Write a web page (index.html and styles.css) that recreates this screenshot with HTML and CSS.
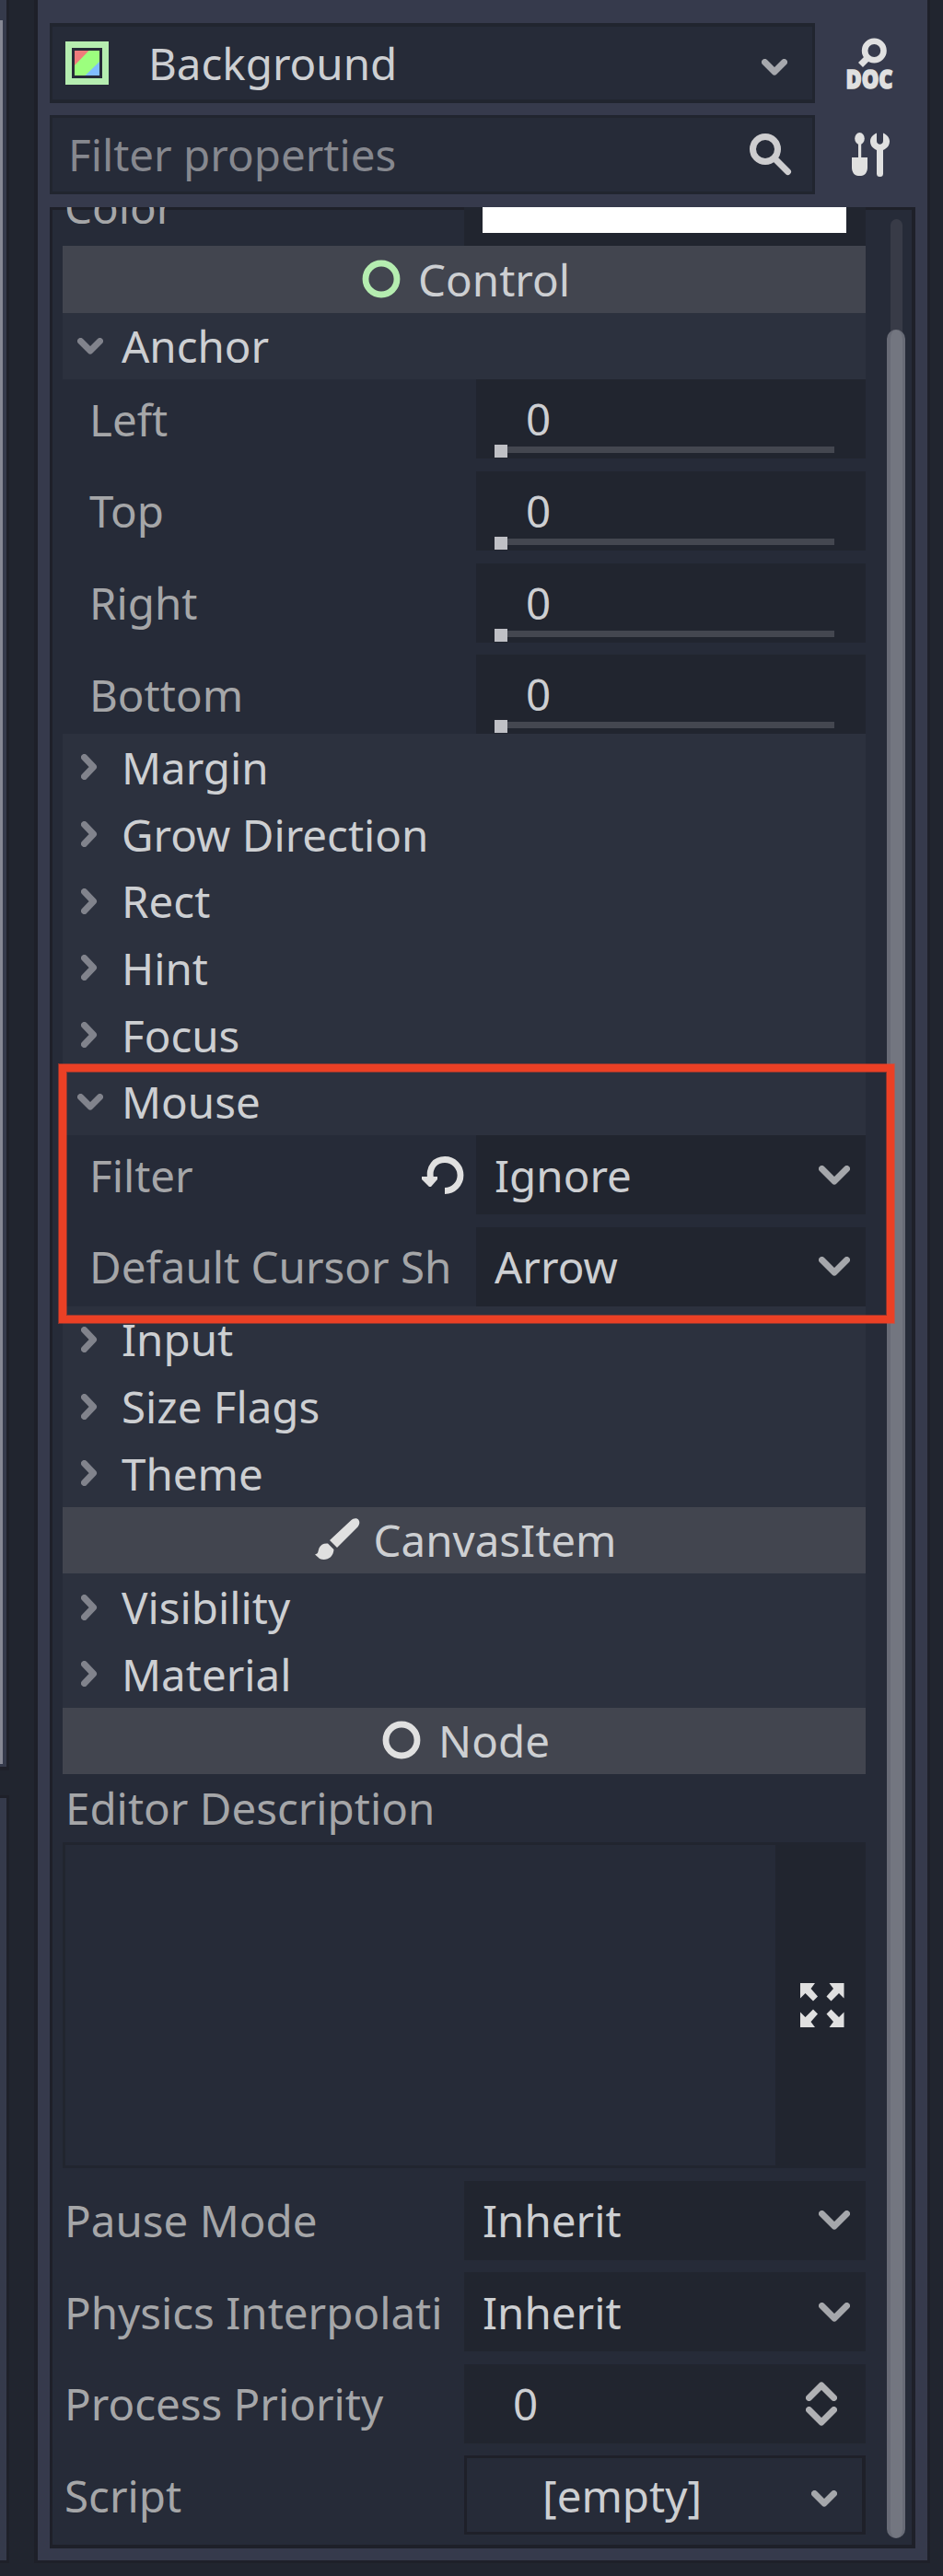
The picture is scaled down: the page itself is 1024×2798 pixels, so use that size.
FILE: index.html
```html
<!DOCTYPE html>
<html lang="en">
<head>
<meta charset="utf-8">
<title>Inspector</title>
<link rel="stylesheet" href="styles.css">
</head>
<body>
<svg class="defs" width="0" height="0" aria-hidden="true">
  <symbol id="down-lg" viewBox="0 0 34 21"><path d="M3.5 3.5 17 17 30.500 3.500" fill="none" stroke="currentColor" stroke-width="7" stroke-linecap="round" stroke-linejoin="round"/></symbol>
  <symbol id="down-sm" viewBox="0 0 28 18"><path d="M3.500 3.500 14 14 24.500 3.500" fill="none" stroke="currentColor" stroke-width="7" stroke-linecap="round" stroke-linejoin="round"/></symbol>
  <symbol id="right-sm" viewBox="0 0 18 28"><path d="M3.500 3.500 13.500 14 3.500 24.500" fill="none" stroke="currentColor" stroke-width="7" stroke-linecap="round" stroke-linejoin="round"/></symbol>
  <symbol id="ring" viewBox="0 0 42 42"><circle cx="21" cy="21" r="17" fill="none" stroke="currentColor" stroke-width="6.800"/></symbol>
</svg>
<div class="editor">
  <aside class="left-docks">
    <div class="dock dock-top"><div class="dock-scroll"></div></div>
    <div class="dock dock-bottom"></div>
  </aside>
  <main class="inspector">
    <div class="toolbar">
      <div class="field node-field">
        <svg class="node-icon" width="47" height="47" viewBox="0 0 47 47"><path d="M3.500 3.500h40v40h-40z" fill="none" stroke="#b5edb0" stroke-width="7"/><path d="M10 10h27v27H10z" fill="#9cff7e"/><path d="M10 10h15.500L10 26z" fill="#ef7b7b"/><path d="M37 37H21.500L37 22z" fill="#80bdff"/></svg>
        <span class="node-name">Background</span>
        <svg class="chev" width="28" height="18"><use href="#down-sm"/></svg>
      </div>
      <svg class="tool" width="54" height="60" viewBox="0 0 54 60">
        <g fill="none" stroke="#e0e0e0"><circle cx="32.300" cy="16" r="10.200" stroke-width="6.600"/><path d="M25 24 17.500 31.500" stroke-width="7"/></g>
        <text class="doc-text" x="1.500" y="56.500" textLength="51" lengthAdjust="spacingAndGlyphs">DOC</text>
      </svg>
    </div>
    <div class="toolbar filter-bar">
      <div class="field filter-field">
        <span class="placeholder">Filter properties</span>
        <svg class="search" width="48" height="48" viewBox="0 0 48 48" fill="none" stroke="#cdcdcf"><circle cx="18" cy="18" r="13.500" stroke-width="7"/><path d="M28 28 42.500 42.500" stroke-width="7" stroke-linecap="round"/></svg>
      </div>
      <svg class="tool" width="54" height="60" viewBox="0 0 54 60" fill="#e0e0e0">
        <ellipse cx="16.500" cy="12.500" rx="5.300" ry="6.500"/><path d="M15 12h3.200v22H15zM8 33h17v11c0 5-3 9-7 9h-3c-4 0-7-4-7-9z"/>
        <path d="M35 6.500c-4.500 2-7 5-7 9 0 4.500 2.500 7.500 7 9.500v25.500a3.500 3.500 0 0 0 7 0V25c4.500-2 7-5 7-9.500 0-4-2.500-7-7-9V15c0 5-7 5-7 0z"/>
      </svg>
    </div>
    <div class="scroll-box">
      <div class="properties">
        <div class="prop wide color-row"><span class="label">Color</span><div class="value swatch-cell"><div class="swatch"></div></div></div>
        <div class="category"><svg class="ring green" width="42" height="42"><use href="#ring"/></svg><span>Control</span></div>
        <div class="section open"><svg class="arrow" width="28" height="18"><use href="#down-sm"/></svg><span>Anchor</span></div>
        <div class="group">
          <div class="prop"><span class="label">Left</span><div class="value num"><span>0</span><div class="slider"><div class="thumb"></div></div></div></div>
          <div class="prop"><span class="label">Top</span><div class="value num"><span>0</span><div class="slider"><div class="thumb"></div></div></div></div>
          <div class="prop"><span class="label">Right</span><div class="value num"><span>0</span><div class="slider"><div class="thumb"></div></div></div></div>
          <div class="prop"><span class="label">Bottom</span><div class="value num"><span>0</span><div class="slider"><div class="thumb"></div></div></div></div>
        </div>
        <div class="section"><svg class="arrow" width="18" height="28"><use href="#right-sm"/></svg><span>Margin</span></div>
        <div class="section"><svg class="arrow" width="18" height="28"><use href="#right-sm"/></svg><span>Grow Direction</span></div>
        <div class="section"><svg class="arrow" width="18" height="28"><use href="#right-sm"/></svg><span>Rect</span></div>
        <div class="section"><svg class="arrow" width="18" height="28"><use href="#right-sm"/></svg><span>Hint</span></div>
        <div class="section"><svg class="arrow" width="18" height="28"><use href="#right-sm"/></svg><span>Focus</span></div>
        <div class="section open"><svg class="arrow" width="28" height="18"><use href="#down-sm"/></svg><span>Mouse</span></div>
        <div class="group">
          <div class="prop"><span class="label">Filter</span>
            <svg class="revert" width="48" height="44" viewBox="0 0 48 44"><path d="M9.500 25.500C7.500 13 15 5.500 25 5.500a17 17 0 0 1 0 34" fill="none" stroke="#e0e0e0" stroke-width="6.800"/><path d="M0 24h17v3l-7 8H8l-8-8z" fill="#e0e0e0"/></svg>
            <div class="value select"><span>Ignore</span><svg width="34" height="21"><use href="#down-lg"/></svg></div></div>
          <div class="prop"><span class="label">Default Cursor Sh</span><div class="value select"><span>Arrow</span><svg width="34" height="21"><use href="#down-lg"/></svg></div></div>
        </div>
        <div class="section"><svg class="arrow" width="18" height="28"><use href="#right-sm"/></svg><span>Input</span></div>
        <div class="section"><svg class="arrow" width="18" height="28"><use href="#right-sm"/></svg><span>Size Flags</span></div>
        <div class="section"><svg class="arrow" width="18" height="28"><use href="#right-sm"/></svg><span>Theme</span></div>
        <div class="category canvas"><svg class="brush" width="49" height="48" viewBox="0 0 49 48" fill="#e0e0e0"><path d="M39 3.500c3-3 7-3 8.500-.5 1.500 2 1 5-1 7.500L24 33l-8-8z"/><path d="M14 28.500l6.500 6.500c-.5 7-5 11-11 11-5 0-6-3-9.500-5.500 4-1 3-3 4.500-7 1.500-3.500 5-5.500 9.500-5z"/></svg><span>CanvasItem</span></div>
        <div class="section"><svg class="arrow" width="18" height="28"><use href="#right-sm"/></svg><span>Visibility</span></div>
        <div class="section"><svg class="arrow" width="18" height="28"><use href="#right-sm"/></svg><span>Material</span></div>
        <div class="category"><svg class="ring" width="42" height="42"><use href="#ring"/></svg><span>Node</span></div>
        <div class="desc-label">Editor Description</div>
        <div class="desc-box"><div class="desc-input"></div>
          <svg width="48" height="48" viewBox="0 0 48 48" fill="#e0e0e0"><g id="q"><path d="M0 0h16l-4.500 6 7.500 8.500-5 5L5.500 11 0 16.500z"/></g><use href="#q" transform="translate(47.500) scale(-1 1)"/><use href="#q" transform="translate(0 48) scale(1 -1)"/><use href="#q" transform="translate(47.500 48) scale(-1 -1)"/></svg>
        </div>
        <div class="group node-props">
          <div class="prop wide"><span class="label">Pause Mode</span><div class="value select"><span>Inherit</span><svg width="34" height="21"><use href="#down-lg"/></svg></div></div>
          <div class="prop wide"><span class="label">Physics Interpolati</span><div class="value select"><span>Inherit</span><svg width="34" height="21"><use href="#down-lg"/></svg></div></div>
          <div class="prop wide"><span class="label">Process Priority</span><div class="value spin"><span>0</span><div class="spinner"><svg class="up" width="34" height="21"><use href="#down-lg"/></svg><svg width="34" height="21"><use href="#down-lg"/></svg></div></div></div>
          <div class="prop wide"><span class="label">Script</span><div class="value script"><span>[empty]</span><svg width="28" height="18"><use href="#down-sm"/></svg></div></div>
        </div>
      </div>
      <div class="scrollbar"><div class="grabber"></div></div>
      <div class="highlight"></div>
    </div>
  </main>
</div>
</body>
</html>
```
FILE: styles.css
```css
* { box-sizing: border-box; }
body {
  margin: 0;
  background: #21252f;
  color: #cdcfd2;
  font: 47.500px/65px "Noto Sans", sans-serif;
}
svg { display: block; flex: none; }
.defs { position: absolute; }
.editor {
  display: flex;
  width: 1024px;
  height: 2798px;
  padding-bottom: 14px;
  overflow: hidden;
}

/* Neighbouring docks, cut off by the window edge */
.left-docks {
  display: flex;
  flex-direction: column;
  gap: 27px;
  width: 10px;
  margin-right: 27px;
}
.dock { background: #353a4b; border-right: 3px solid #1e2029; }
.dock-top { height: 1923px; padding-top: 22px; border-bottom: 4px solid #1e2029; }
.dock-scroll { width: 3px; height: 1894px; background: #868894; }
.dock-bottom { flex: 1; border-top: 3px solid #1e2029; border-bottom: 3px solid #1e2029; }

.inspector {
  width: 973px;
  padding: 25px 13px 13px;
  background: #363a4c;
  border: solid #1e2029;
  border-width: 0 3px 3px 4px;
}

.toolbar { display: flex; align-items: center; height: 87px; margin-bottom: 13px; }
.filter-bar { height: 86px; margin-bottom: 14px; }
.field {
  display: flex;
  align-items: center;
  width: 831px;
  height: 100%;
  background: #262b38;
  border: 3px solid #21252f;
}
.node-field { border-width: 4px 3px; padding: 0 27px 0 14px; }
.node-field span { margin-left: 43px; padding-bottom: 1px; }
.node-field .chev { margin: 8px 0 0 auto; color: #a6a8ad; }
.filter-field { padding: 0 21px 0 17px; }
.placeholder { padding-bottom: 1px; color: #86888f; }
.search { margin-left: auto; }
.tool { margin-left: 32px; overflow: visible; }
.doc-text {
  font: 800 29px "Open Sans", sans-serif;
  fill: #e0e0e0;
  stroke: #e0e0e0;
  stroke-width: 1.500px;
}

.scroll-box {
  position: relative;
  display: flex;
  height: 2543px;
  padding-left: 14px;
  overflow: hidden;
  background: #262b38;
  box-shadow: inset 3px 3px #1e2029, inset -4px -4px #1e2029;
}
.properties { width: 872px; }

.prop { display: flex; align-items: center; height: 86px; }
.label {
  flex: 1;
  min-width: 0;
  padding-left: 29px;
  overflow: hidden;
  white-space: nowrap;
  color: #a5a6a8;
}
.wide .label { padding-left: 2px; }
.value {
  display: flex;
  align-items: center;
  width: 423px;
  height: 86px;
  background: #21252f;
}
.wide .value { width: 436px; }
.group { display: flex; flex-direction: column; gap: 13.600px; }

.color-row { margin-top: -44px; }
.swatch-cell { padding: 0 21px 14px 20px; }
.swatch { width: 100%; height: 100%; background: #fff; }

.category, .section { display: flex; align-items: center; height: 72.670px; }
.category {
  justify-content: center;
  padding: 0 0 0 4px;
  background: #42454f;
}
.category span { margin-left: 19px; }
.ring { color: #e0e0e0; margin-bottom: 1px; }
.ring.green { color: #b5edb0; }
.canvas span { margin-left: 14px; }
.canvas .brush { margin-bottom: 2px; }
.section { gap: 26px; padding-left: 20px; background: #2c313e; }
.section.open { padding-left: 16px; gap: 20px; }
.arrow { color: #81838c; }

.num { flex-direction: column; align-items: stretch; padding: 11px 34px 0 20px; }
.num > span { margin-left: 34px; height: 62px; line-height: 64px; }
.slider { flex: none; height: 7px; background: #444750; }
.thumb { width: 14px; height: 14px; margin-top: -2px; background: #bfc0c5; }

.select { justify-content: space-between; padding: 0 17px 0 20px; }
.select svg, .script svg { color: #a5a7ab; }
.revert { margin-right: 11px; }

.desc-label { height: 73.400px; padding: 4px 0 0 3px; color: #a5a6a8; }
.desc-box {
  display: flex;
  align-items: center;
  height: 354px;
  padding: 3px;
  background: #21252f;
  margin-bottom: 14px;
}
.desc-input { width: 771px; height: 100%; margin-right: 27px; background: #262b38; }

.node-props { gap: 13.600px; }
.spin { justify-content: space-between; padding: 0 31px 0 53px; }
.spinner { display: flex; flex-direction: column; gap: 6px; color: #b0b1b4; }
.up { transform: rotate(180deg); }
.script {
  justify-content: space-between;
  padding: 0 27px 0 82px;
  background: #262b38;
  border: solid #1e2029;
  border-width: 3px 4px 3px 3px;
}
.script svg { margin-top: 8px; }

.scrollbar {
  width: 13px;
  height: 2517px;
  margin: 13px 0 0 27px;
  padding-top: 120px;
  border-radius: 7px;
  background: #383b47;
}
.grabber {
  width: 20px;
  height: 2399px;
  margin-left: -4px;
  border-radius: 10px;
  background: #737680;
  border: solid #686b76;
  border-width: 0 3px 0 4px;
}

/* Annotation frame laid over the Mouse section */
.highlight {
  position: absolute;
  left: 10px;
  top: 931px;
  width: 907px;
  height: 281px;
  border: 8px solid #eb4025;
  box-shadow: 0 0 0 1px rgba(235, 64, 37, .5), inset 0 0 0 1px rgba(235, 64, 37, .5);
}
```
